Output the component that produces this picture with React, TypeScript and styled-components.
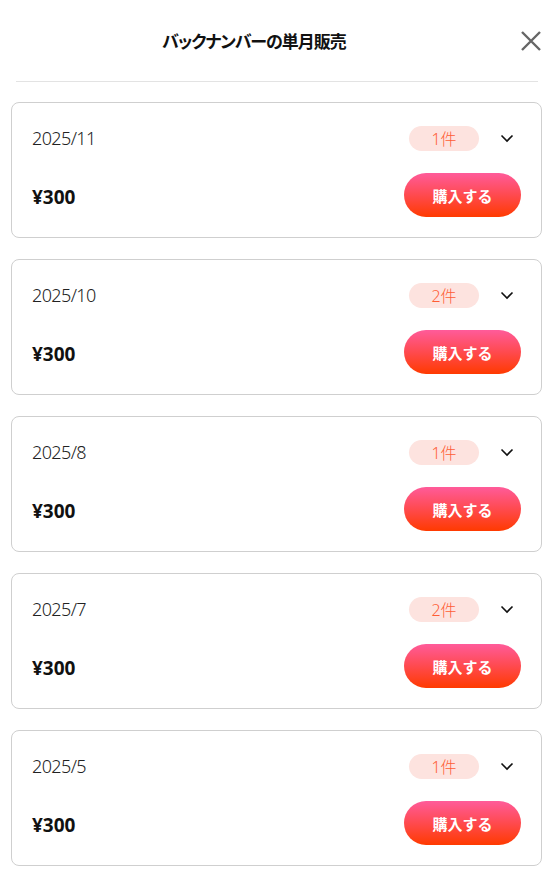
import React from "react";
import styled, { createGlobalStyle } from "styled-components";

const Global = createGlobalStyle`
  html, body { margin: 0; padding: 0; background: #fff; }
  body { font-family: "Noto Sans", "Noto Sans CJK JP", sans-serif; color: #111; }
  * { box-sizing: border-box; }
`;

const Page = styled.div`
  width: 554px;
  display: flex;
  flex-direction: column;
`;

const Header = styled.header`
  height: 82px;
  margin: 0 16px;
  border-bottom: 1px solid #e3e3e3;
  display: flex;
  align-items: center;
`;

const TitleArea = styled.div`
  flex: 1;
  display: flex;
  justify-content: center;
`;

const Title = styled.h1`
  margin: 0;
  font-family: "Noto Sans CJK JP", sans-serif;
  font-size: 17px;
  font-weight: 700;
  font-feature-settings: "palt";
  letter-spacing: -1px;
  color: #111;
`;

const CloseButton = styled.button`
  width: 50px;
  height: 24px;
  margin-right: -4px;
  padding: 0;
  border: 0;
  background: none;
  display: flex;
  align-items: center;
  justify-content: flex-end;
`;

const List = styled.div`
  display: flex;
  flex-direction: column;
  gap: 21px;
  padding: 20px 12px 0 11px;
`;

const Card = styled.div`
  height: 136px;
  border: 1px solid #cfcfcf;
  border-radius: 8px;
  padding: 13px 20px 20px 20px;
  display: flex;
  flex-direction: column;
  gap: 13px;
`;

const Row = styled.div`
  height: 44px;
  display: flex;
  align-items: center;
  justify-content: space-between;
`;

const DateText = styled.span`
  font-family: "Noto Sans", "Noto Sans CJK JP", sans-serif;
  font-size: 18px;
  font-weight: 300;
  letter-spacing: -0.6px;
  color: #222;
`;

const Right = styled.div`
  display: flex;
  align-items: center;
  gap: 21px;
`;

const Badge = styled.span`
  width: 70px;
  height: 25px;
  border-radius: 13px;
  background: #fde3df;
  color: #ff5d35;
  font-family: "Noto Sans", "Noto Sans CJK JP", sans-serif;
  font-size: 16px;
  font-weight: 300;
  display: flex;
  align-items: center;
  justify-content: center;
`;

const Chevron = styled.span`
  width: 14px;
  margin-right: 7px;
  display: flex;
  align-items: center;
  justify-content: center;
`;

const Price = styled.span`
  padding-top: 4px;
  font-family: "Noto Sans", "Noto Sans CJK JP", sans-serif;
  font-size: 19px;
  font-weight: 700;
  color: #111;
`;

const BuyButton = styled.button`
  width: 117px;
  height: 44px;
  border: 0;
  border-radius: 22px;
  background: linear-gradient(180deg, #ff5b9a 0%, #ff4a4f 50%, #ff3a00 100%);
  color: #fff;
  font-family: "Noto Sans CJK JP", sans-serif;
  font-size: 15px;
  font-weight: 700;
  padding: 0;
  display: flex;
  align-items: center;
  justify-content: center;
`;

const items = [
  { date: "2025/11", count: 1 },
  { date: "2025/10", count: 2 },
  { date: "2025/8", count: 1 },
  { date: "2025/7", count: 2 },
  { date: "2025/5", count: 1 },
];

export default function App() {
  return (
    <Page>
      <Global />
      <Header>
        <TitleArea>
          <Title>バックナンバーの単月販売</Title>
        </TitleArea>
        <CloseButton aria-label="close">
          <svg width="22" height="22" viewBox="0 0 22 22">
            <path d="M2 2 L20 20 M20 2 L2 20" stroke="#666" strokeWidth="2.4" strokeLinecap="butt" />
          </svg>
        </CloseButton>
      </Header>
      <List>
        {items.map((it) => (
          <Card key={it.date}>
            <Row>
              <DateText>{it.date}</DateText>
              <Right>
                <Badge>{it.count}件</Badge>
                <Chevron>
                  <svg width="14" height="9" viewBox="0 0 14 9">
                    <path d="M1.5 1.5 L7 7 L12.5 1.5" fill="none" stroke="#111" strokeWidth="1.6" />
                  </svg>
                </Chevron>
              </Right>
            </Row>
            <Row>
              <Price>¥300</Price>
              <BuyButton>購入する</BuyButton>
            </Row>
          </Card>
        ))}
      </List>
    </Page>
  );
}
